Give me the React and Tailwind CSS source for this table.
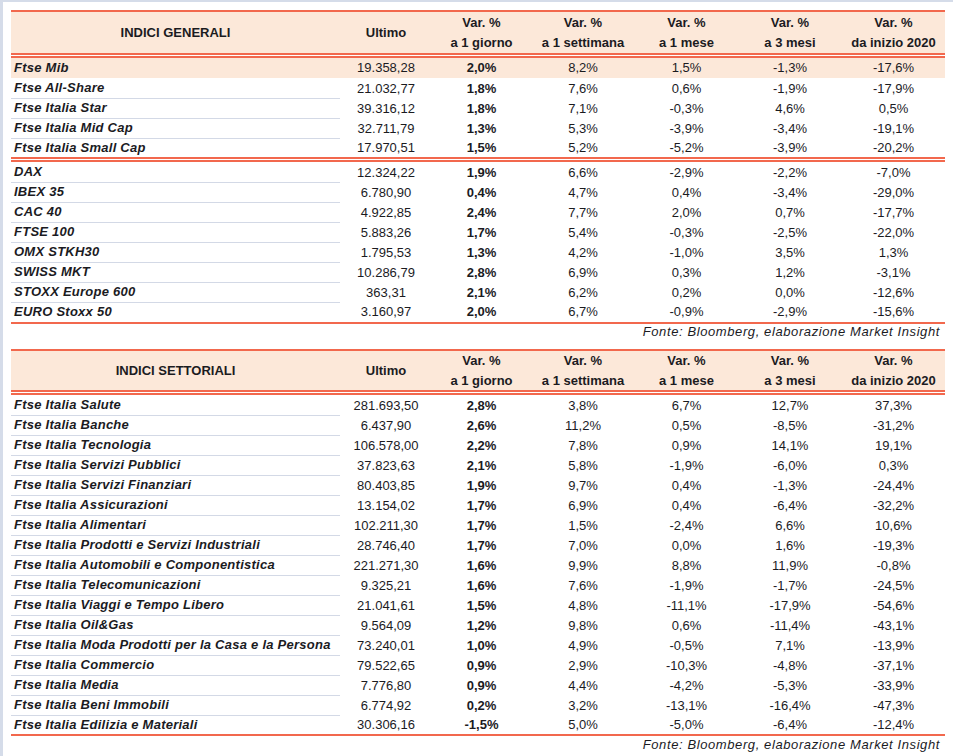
import React from "react";

const COLS = "grid grid-cols-[329px_92px_99px_104px_103px_104px_103px]";

const generaliA = [
  ["Ftse Mib", "19.358,28", "2,0%", "8,2%", "1,5%", "-1,3%", "-17,6%"],
  ["Ftse All-Share", "21.032,77", "1,8%", "7,6%", "0,6%", "-1,9%", "-17,9%"],
  ["Ftse Italia Star", "39.316,12", "1,8%", "7,1%", "-0,3%", "4,6%", "0,5%"],
  ["Ftse Italia Mid Cap", "32.711,79", "1,3%", "5,3%", "-3,9%", "-3,4%", "-19,1%"],
  ["Ftse Italia Small Cap", "17.970,51", "1,5%", "5,2%", "-5,2%", "-3,9%", "-20,2%"],
];

const generaliB = [
  ["DAX", "12.324,22", "1,9%", "6,6%", "-2,9%", "-2,2%", "-7,0%"],
  ["IBEX 35", "6.780,90", "0,4%", "4,7%", "0,4%", "-3,4%", "-29,0%"],
  ["CAC 40", "4.922,85", "2,4%", "7,7%", "2,0%", "0,7%", "-17,7%"],
  ["FTSE 100", "5.883,26", "1,7%", "5,4%", "-0,3%", "-2,5%", "-22,0%"],
  ["OMX STKH30", "1.795,53", "1,3%", "4,2%", "-1,0%", "3,5%", "1,3%"],
  ["SWISS MKT", "10.286,79", "2,8%", "6,9%", "0,3%", "1,2%", "-3,1%"],
  ["STOXX Europe 600", "363,31", "2,1%", "6,2%", "0,2%", "0,0%", "-12,6%"],
  ["EURO Stoxx 50", "3.160,97", "2,0%", "6,7%", "-0,9%", "-2,9%", "-15,6%"],
];

const settoriali = [
  ["Ftse Italia Salute", "281.693,50", "2,8%", "3,8%", "6,7%", "12,7%", "37,3%"],
  ["Ftse Italia Banche", "6.437,90", "2,6%", "11,2%", "0,5%", "-8,5%", "-31,2%"],
  ["Ftse Italia Tecnologia", "106.578,00", "2,2%", "7,8%", "0,9%", "14,1%", "19,1%"],
  ["Ftse Italia Servizi Pubblici", "37.823,63", "2,1%", "5,8%", "-1,9%", "-6,0%", "0,3%"],
  ["Ftse Italia Servizi Finanziari", "80.403,85", "1,9%", "9,7%", "0,4%", "-1,3%", "-24,4%"],
  ["Ftse Italia Assicurazioni", "13.154,02", "1,7%", "6,9%", "0,4%", "-6,4%", "-32,2%"],
  ["Ftse Italia Alimentari", "102.211,30", "1,7%", "1,5%", "-2,4%", "6,6%", "10,6%"],
  ["Ftse Italia Prodotti e Servizi Industriali", "28.746,40", "1,7%", "7,0%", "0,0%", "1,6%", "-19,3%"],
  ["Ftse Italia Automobili e Componentistica", "221.271,30", "1,6%", "9,9%", "8,8%", "11,9%", "-0,8%"],
  ["Ftse Italia Telecomunicazioni", "9.325,21", "1,6%", "7,6%", "-1,9%", "-1,7%", "-24,5%"],
  ["Ftse Italia Viaggi e Tempo Libero", "21.041,61", "1,5%", "4,8%", "-11,1%", "-17,9%", "-54,6%"],
  ["Ftse Italia Oil&Gas", "9.564,09", "1,2%", "9,8%", "0,6%", "-11,4%", "-43,1%"],
  ["Ftse Italia Moda Prodotti per la Casa e la Persona", "73.240,01", "1,0%", "4,9%", "-0,5%", "7,1%", "-13,9%"],
  ["Ftse Italia Commercio", "79.522,65", "0,9%", "2,9%", "-10,3%", "-4,8%", "-37,1%"],
  ["Ftse Italia Media", "7.776,80", "0,9%", "4,4%", "-4,2%", "-5,3%", "-33,9%"],
  ["Ftse Italia Beni Immobili", "6.774,92", "0,2%", "3,2%", "-13,1%", "-16,4%", "-47,3%"],
  ["Ftse Italia Edilizia e Materiali", "30.306,16", "-1,5%", "5,0%", "-5,0%", "-6,4%", "-12,4%"],
];

function Row({ r, sep = true, highlight = false, h = "h-[20px]" }) {
  return (
    <div className={`${COLS} ${h} items-center ${highlight ? "bg-[#fce8d9]" : ""}`}>
      <div
        className={`h-full flex items-center pl-[3px] font-bold italic tracking-[0.25px] ${
          sep ? "border-b border-[#d3d9e6]" : ""
        }`}
      >
        {r[0]}
      </div>
      <div className="text-center">{r[1]}</div>
      <div className="text-center font-bold">{r[2]}</div>
      <div className="text-center">{r[3]}</div>
      <div className="text-center">{r[4]}</div>
      <div className="text-center">{r[5]}</div>
      <div className="text-center">{r[6]}</div>
    </div>
  );
}

function Header({ title, h }) {
  const vars = ["a 1 giorno", "a 1 settimana", "a 1 mese", "a 3 mesi", "da inizio 2020"];
  return (
    <div className={`${COLS} ${h} items-center bg-[#fce8d9] font-bold leading-[20px]`}>
      <div className="text-center">{title}</div>
      <div className="text-center">Ultimo</div>
      {vars.map((v) => (
        <div key={v} className="flex flex-col items-center">
          <span>Var. %</span>
          <span>{v}</span>
        </div>
      ))}
    </div>
  );
}

function Red() {
  return <div className="h-[2px] bg-[#f2684d]" />;
}

function DoubleRed() {
  return (
    <div className="flex flex-col">
      <div className="h-[2px] bg-[#f2684d]" />
      <div className="h-[1px]" />
      <div className="h-[2px] bg-[#f2684d]" />
    </div>
  );
}

export default function App() {
  return (
    <div className="w-[953px] h-[756px] bg-white border-l-[3px] border-t-2 border-[#d5dce9] pl-2 pt-2 overflow-hidden font-['Liberation_Sans',Arial,sans-serif] text-[13px] text-[#1b1b1f]">
      <div className="w-[934px]">
        <Red />
        <Header title="INDICI GENERALI" h="h-[41px]" />
        <DoubleRed />
        {generaliA.map((r, i) => (
          <Row
            key={r[0]}
            r={r}
            highlight={i === 0}
            sep={i !== 0 && i !== generaliA.length - 1}
            h={i === generaliA.length - 1 ? "h-[19px]" : "h-[20px]"}
          />
        ))}
        <DoubleRed />
        {generaliB.map((r, i) => (
          <Row key={r[0]} r={r} sep={i !== generaliB.length - 1} />
        ))}
        <Red />
        <div className="h-[25px] leading-[16px] text-right pr-[5px] italic tracking-[0.6px]">
          Fonte: Bloomberg, elaborazione Market Insight
        </div>
        <Red />
        <Header title="INDICI SETTORIALI" h="h-[39px]" />
        <DoubleRed />
        {settoriali.map((r, i) => (
          <Row
            key={r[0]}
            r={r}
            sep={i !== settoriali.length - 1}
            h={i === settoriali.length - 1 ? "h-[19px]" : "h-[20px]"}
          />
        ))}
        <Red />
        <div className="leading-[18px] text-right pr-[5px] italic tracking-[0.6px]">
          Fonte: Bloomberg, elaborazione Market Insight
        </div>
      </div>
    </div>
  );
}
